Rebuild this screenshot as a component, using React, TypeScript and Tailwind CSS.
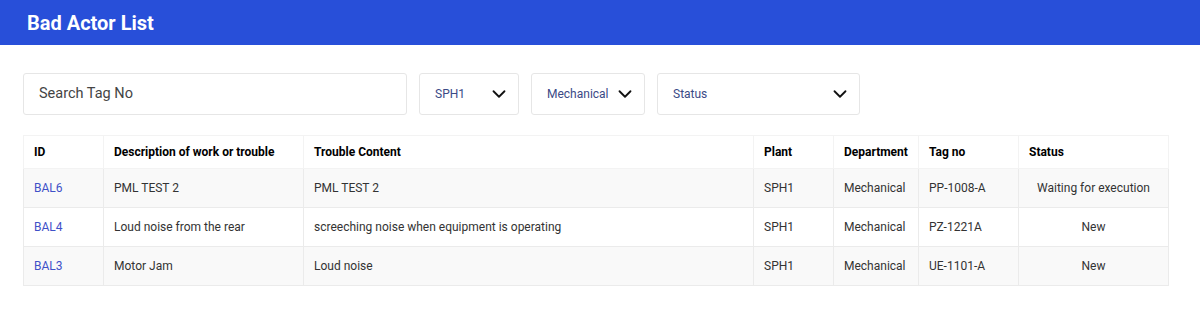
import React from 'react';
import { ChevronDown } from 'lucide-react';

type Row = {
  id: string;
  description: string;
  content: string;
  plant: string;
  department: string;
  tagNo: string;
  status: string;
};

const rows: Row[] = [
  { id: 'BAL6', description: 'PML TEST 2', content: 'PML TEST 2', plant: 'SPH1', department: 'Mechanical', tagNo: 'PP-1008-A', status: 'Waiting for execution' },
  { id: 'BAL4', description: 'Loud noise from the rear', content: 'screeching noise when equipment is operating', plant: 'SPH1', department: 'Mechanical', tagNo: 'PZ-1221A', status: 'New' },
  { id: 'BAL3', description: 'Motor Jam', content: 'Loud noise', plant: 'SPH1', department: 'Mechanical', tagNo: 'UE-1101-A', status: 'New' },
];

const SelectBox: React.FC<{ label: string; className: string }> = ({ label, className }) => (
  <div className={`h-[42px] flex items-center justify-between pl-[15px] pr-[8px] border border-[#e6e6e6] rounded-[3px] bg-white ${className}`}>
    <span className="text-[12px] text-[#3b4a86]">{label}</span>
    <ChevronDown className="w-[22px] h-[22px] text-[#111]" strokeWidth={2} />
  </div>
);

const App: React.FC = () => {
  return (
    <div className="min-h-screen bg-white font-['Roboto',sans-serif]">
      {/* Header */}
      <header className="h-[45px] bg-[#284fd9] flex items-center px-[27px]">
        <h1 className="text-[20px] font-bold text-white leading-none">Bad Actor List</h1>
      </header>

      <div className="px-[23px] pt-[28px]">
        {/* Filters */}
        <div className="flex items-center gap-[12px] mb-[20px]">
          <div className="w-[384px] h-[42px] flex items-center px-[15px] border border-[#e6e6e6] rounded-[3px]">
            <span className="text-[14.5px] text-[#444]">Search Tag No</span>
          </div>
          <SelectBox label="SPH1" className="w-[100px]" />
          <SelectBox label="Mechanical" className="w-[114px]" />
          <SelectBox label="Status" className="w-[203px]" />
        </div>

        {/* Table */}
        <table className="w-[1145px] border-collapse text-[12px] text-[#333] table-fixed">
          <colgroup>
            <col className="w-[80px]" />
            <col className="w-[200px]" />
            <col className="w-[450px]" />
            <col className="w-[80px]" />
            <col className="w-[85px]" />
            <col className="w-[100px]" />
            <col className="w-[150px]" />
          </colgroup>
          <thead>
            <tr className="h-[33px] bg-white">
              {['ID', 'Description of work or trouble', 'Trouble Content', 'Plant', 'Department', 'Tag no', 'Status'].map(h => (
                <th key={h} className="text-left font-bold text-black px-[10px] border border-[#f3f3f3]">{h}</th>
              ))}
            </tr>
          </thead>
          <tbody>
            {rows.map((r, i) => (
              <tr key={r.id} className={`h-[39px] ${i % 2 === 0 ? 'bg-[#f9f9f9]' : 'bg-white'}`}>
                <td className="px-[10px] border border-[#ebebeb] text-[#3f51c8]">{r.id}</td>
                <td className="px-[10px] border border-[#ebebeb]">{r.description}</td>
                <td className="px-[10px] border border-[#ebebeb]">{r.content}</td>
                <td className="px-[10px] border border-[#ebebeb]">{r.plant}</td>
                <td className="px-[10px] border border-[#ebebeb]">{r.department}</td>
                <td className="px-[10px] border border-[#ebebeb]">{r.tagNo}</td>
                <td className="px-[10px] border border-[#ebebeb] text-center">{r.status}</td>
              </tr>
            ))}
          </tbody>
        </table>
      </div>
    </div>
  );
};

export default App;
